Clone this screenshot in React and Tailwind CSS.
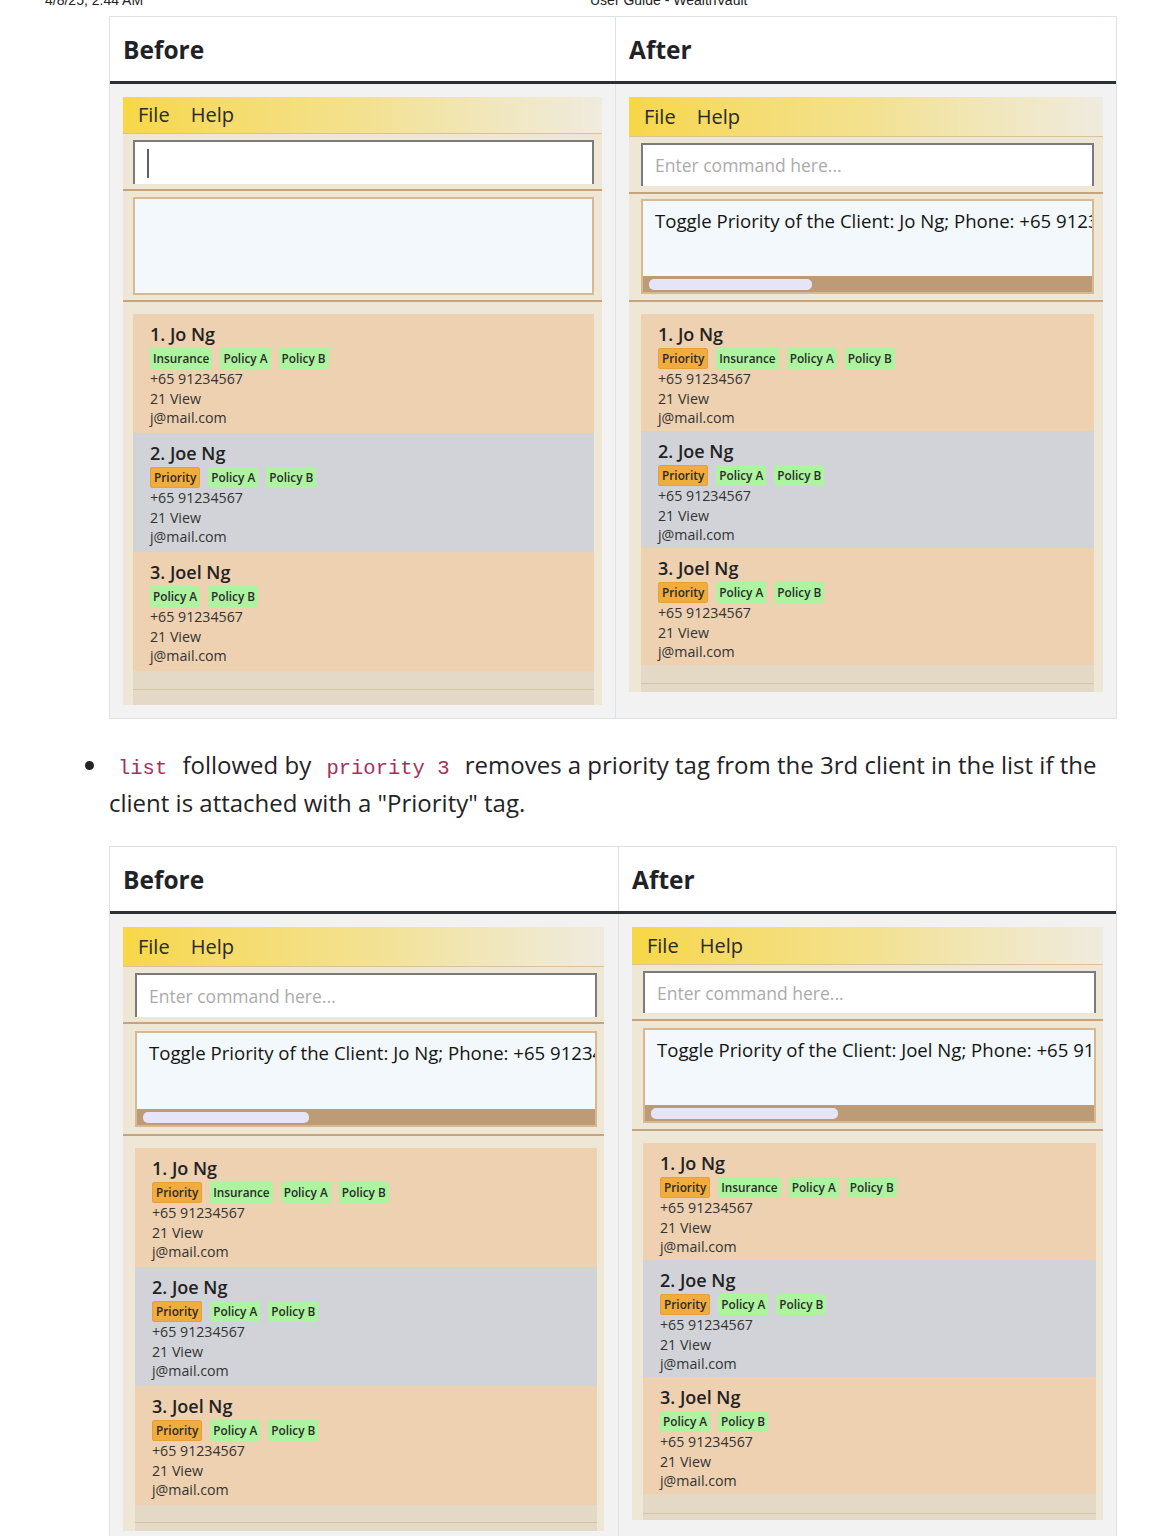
import React from 'react';

const TAN = 'bg-[#edd1b1]';
const GREY = 'bg-[#d1d3d8]';

const jo = (tags) => ({ name: 'Jo Ng', tags });
const joe = (tags) => ({ name: 'Joe Ng', tags });
const joel = (tags) => ({ name: 'Joel Ng', tags });

const ALL = ['Priority', 'Policy A', 'Policy B'];

const SHOTS = {
  topBefore: {
    w: 'w-[479px]', pad: 'pl-[10px] pr-[8px]', menuH: 'h-[37px]',
    cmd: 'pt-[6px] pb-[5px]', inputH: 'h-[44px]',
    res: 'pt-[6px] pb-[5px]', boxH: 'h-[98px]',
    caret: true, result: null, thumb: '',
    cardH: 'h-[119px]', emptyH: 'h-[34px] pt-[18px]',
    clients: [jo(['Insurance', 'Policy A', 'Policy B']), joe(ALL), joel(['Policy A', 'Policy B'])],
  },
  topAfter: {
    w: 'w-[474px]', pad: 'pl-[12px] pr-[9px]', menuH: 'h-[40px]',
    cmd: 'pt-[6px] pb-[6px]', inputH: 'h-[43px]',
    res: 'pt-[5px] pb-[6px]', boxH: 'h-[95px]',
    caret: false, result: 'Toggle Priority of the Client: Jo Ng; Phone: +65 91234567; Email: j@mail.com', thumb: 'w-[163px]',
    cardH: 'h-[117px]', emptyH: 'h-[27px] pt-[18px]',
    clients: [jo(['Priority', 'Insurance', 'Policy A', 'Policy B']), joe(ALL), joel(ALL)],
  },
  bottomBefore: {
    w: 'w-[481px]', pad: 'pl-[12px] pr-[7px]', menuH: 'h-[40px]',
    cmd: 'pt-[6px] pb-[5px]', inputH: 'h-[44px]',
    res: 'pt-[7px] pb-[7px]', boxH: 'h-[96px]',
    caret: false, result: 'Toggle Priority of the Client: Jo Ng; Phone: +65 91234567; Email: j@mail.com', thumb: 'w-[166px]',
    cardH: 'h-[119px]', emptyH: 'h-[26px] pt-[17px]',
    clients: [jo(['Priority', 'Insurance', 'Policy A', 'Policy B']), joe(ALL), joel(ALL)],
  },
  bottomAfter: {
    w: 'w-[471px]', pad: 'pl-[11px] pr-[7px]', menuH: 'h-[38px]',
    cmd: 'pt-[6px] pb-[6px]', inputH: 'h-[42px]',
    res: 'pt-[7px] pb-[6px]', boxH: 'h-[95px]',
    caret: false, result: 'Toggle Priority of the Client: Joel Ng; Phone: +65 91234567; Email: j@mail.com', thumb: 'w-[187px]',
    cardH: 'h-[117px]', emptyH: 'h-[26px] pt-[19px]',
    clients: [jo(['Priority', 'Insurance', 'Policy A', 'Policy B']), joe(ALL), joel(['Policy A', 'Policy B'])],
  },
};

function Tag({ label }) {
  const prio = label === 'Priority';
  return (
    <span
      className={`h-[21px] px-[3px] rounded-[2px] text-[11.8px] font-semibold text-[#2a2a2a] ${
        prio ? 'bg-[#f0ac3d] border border-[#e6a03a] leading-[19px]' : 'bg-[#adf3a0] leading-[21px]'
      }`}
    >
      {label}
    </span>
  );
}

function Card({ idx, client, h, bg }) {
  return (
    <div className={`${h} ${bg} pl-[17px] pt-[8px]`}>
      <div className="text-[18px] leading-[25px] font-semibold text-[#222]">
        {idx}. {client.name}
      </div>
      <div className="flex gap-[8px] mt-[1px]">
        {client.tags.map((t) => (
          <Tag key={t} label={t} />
        ))}
      </div>
      <div className="text-[14.2px] leading-[19.5px] text-[#333]">
        <div>+65 91234567</div>
        <div>21 View</div>
        <div>j@mail.com</div>
      </div>
    </div>
  );
}

function AppShot({ c }) {
  return (
    <div className={`${c.w} bg-[#efe7d6] font-['Open_Sans',sans-serif]`}>
      <div
        className={`${c.menuH} flex items-center bg-linear-to-r from-[#f7d746] via-[#f3e18f] to-[#efebdf] border-b border-[#dcc09a] text-[20px] text-[#2a2a2a]`}
      >
        <span className="ml-[15px]">File</span>
        <span className="ml-[21px]">Help</span>
      </div>

      <div className={`${c.pad} ${c.cmd} border-b-2 border-[#c6a37c]`}>
        <div className={`${c.inputH} bg-white border-2 border-b-0 border-[#7b7b7b] flex items-center`}>
          {c.caret ? (
            <div className="ml-[12px] w-[2px] h-[29px] bg-[#606060]" />
          ) : (
            <span className="ml-[12px] text-[17.5px] text-[#ababab]">Enter command here...</span>
          )}
        </div>
      </div>

      <div className={`${c.pad} ${c.res} border-b-2 border-[#c6a37c]`}>
        <div className={`${c.boxH} border-2 border-[#d6b992] bg-[#f2f8fc] flex flex-col overflow-hidden`}>
          {c.result && (
            <>
              <div className="pt-[8px] pl-[12px] text-[18.6px] leading-[24px] text-[#141414] whitespace-nowrap overflow-hidden">
                {c.result}
              </div>
              <div className="flex-1" />
              <div className="h-[16px] bg-[#bd9b76] pt-[3px] pl-[6px]">
                <div className={`${c.thumb} h-[11px] rounded-[5px] bg-[#e6e5f8]`} />
              </div>
            </>
          )}
        </div>
      </div>

      <div className={`${c.pad} pt-[12px]`}>
        <div className="bg-[#e3d9c6]">
          {c.clients.map((cl, i) => (
            <Card key={i} idx={i + 1} client={cl} h={c.cardH} bg={i === 1 ? GREY : TAN} />
          ))}
          <div className={c.emptyH}>
            <div className="border-t border-[#d5c3a5]" />
          </div>
        </div>
      </div>
    </div>
  );
}

function Compare({ left, right, leftW, bodyH }) {
  return (
    <div className="ml-[109px] w-[1008px] border border-[#dfe2e5]">
      <div className="flex h-[67px] border-b-[3px] border-[#2c3034] font-['Open_Sans',sans-serif] font-bold text-[24.5px] text-[#1f2328]">
        <div className={`${leftW} border-r border-[#dfe2e5] pl-[13px] pt-[3px] flex items-center`}>Before</div>
        <div className="flex-1 pl-[13px] pt-[3px] flex items-center">After</div>
      </div>
      <div className={`flex ${bodyH} bg-[#f2f2f2]`}>
        <div className={`${leftW} border-r border-[#dfe2e5] pl-[13px] pt-[13px]`}>
          <AppShot c={left} />
        </div>
        <div className="flex-1 pl-[13px] pt-[13px]">
          <AppShot c={right} />
        </div>
      </div>
    </div>
  );
}

export default function App() {
  return (
    <div className="w-[1160px] h-[1536px] overflow-hidden bg-white text-[#1f2328]">
      <div className="-mt-[8px] h-[16px] flex text-[14px] leading-[16px] font-['Liberation_Sans',sans-serif] text-[#222]">
        <span className="w-[590px] pl-[45px]">4/8/25, 2:44 AM</span>
        <span>User Guide - WealthVault</span>
      </div>

      <div className="mt-[8px]">
        <Compare left={SHOTS.topBefore} right={SHOTS.topAfter} leftW="w-[506px]" bodyH="h-[634px]" />
      </div>

      <ul className="ml-[109px] mt-[27px] w-[1005px] list-disc font-['Open_Sans',sans-serif] text-[24px] leading-[38px] text-[#1f2328]">
        <li>
          <code className="px-[9px] font-['Liberation_Mono',monospace] text-[20.5px] leading-none text-[#a3305f]">list</code>{' '}
          followed by{' '}
          <code className="px-[9px] font-['Liberation_Mono',monospace] text-[20.5px] leading-none text-[#a3305f]">priority 3</code>{' '}
          removes a priority tag from the 3rd client in the list if the client is attached with a &quot;Priority&quot; tag.
        </li>
      </ul>

      <div className="mt-[24px]">
        <Compare left={SHOTS.bottomBefore} right={SHOTS.bottomAfter} leftW="w-[509px]" bodyH="h-[660px]" />
      </div>
    </div>
  );
}
